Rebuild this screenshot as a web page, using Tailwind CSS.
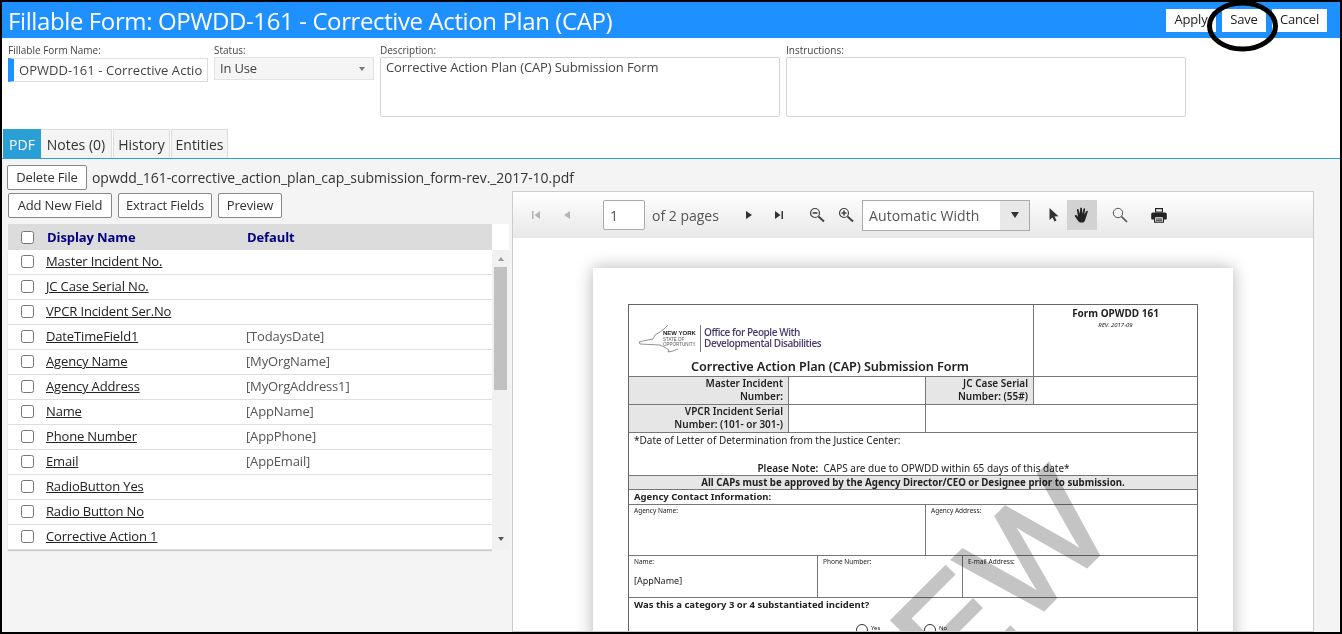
<!DOCTYPE html>
<html lang="en">
<head>
    <meta charset="UTF-8" />
    <title>Fillable Form: OPWDD-161</title>
    <script src="https://cdn.jsdelivr.net/npm/@tailwindcss/browser@4"></script>
</head>
<body class="bg-black">
<div class="relative w-[1342px] h-[634px] overflow-hidden border-2 border-black bg-[#f4f4f4] font-['Open_Sans',sans-serif] text-[#333]">

    <!-- Title bar -->
    <div class="flex items-center h-[36px] pl-[6px] pr-[13px] bg-[#1e90ff]">
        <h1 class="pt-[1px] text-[24px] tracking-[-0.39px] text-white whitespace-nowrap">Fillable Form: OPWDD-161 - Corrective Action Plan (CAP)</h1>
        <div class="ml-auto flex gap-[6px] text-[13px] tracking-[-0.2px] text-[#222]">
            <button class="w-[50px] h-[23px] bg-white">Apply</button>
            <button class="w-[44px] h-[23px] bg-white">Save</button>
            <button class="w-[55px] h-[23px] bg-white">Cancel</button>
        </div>
    </div>

    <!-- Form fields -->
    <div class="flex gap-[6px] h-[91px] pt-[5px] pl-[6px] bg-white">
        <div class="w-[200px]">
            <label class="block h-[14px] text-[10px] leading-[14px] text-[#444]">Fillable Form Name:</label>
            <input value="OPWDD-161 - Corrective Action Plan (CAP)" class="w-full h-[24px] pl-[5px] pr-[5px] border border-[#ddd] border-l-[6px] border-l-[#1e90ff] text-[13px] tracking-[0.06px] text-[#444] outline-none" />
        </div>
        <div class="w-[160px]">
            <label class="block h-[14px] text-[10px] leading-[14px] text-[#444]">Status:</label>
            <div class="flex items-center justify-between h-[23px] pl-[5px] pr-[8px] bg-[#f5f5f5] border border-[#e2e2e2] text-[13px] tracking-[-0.2px] text-[#444]">
                <span class="pt-[1px]">In Use</span>
                <span class="w-0 h-0 border-x-[3.5px] border-x-transparent border-t-[4px] border-t-[#777]"></span>
            </div>
        </div>
        <div class="w-[400px]">
            <label class="block h-[14px] text-[10px] leading-[14px] text-[#444]">Description:</label>
            <textarea class="block w-full h-[60px] px-[5px] py-0 border border-[#d4d4d4] rounded-[2px] resize-none text-[13px] tracking-[-0.1px] text-[#444] outline-none">Corrective Action Plan (CAP) Submission Form</textarea>
        </div>
        <div class="w-[400px]">
            <label class="block h-[14px] text-[10px] leading-[14px] text-[#444]">Instructions:</label>
            <textarea class="block w-full h-[60px] border border-[#d4d4d4] rounded-[2px] resize-none outline-none"></textarea>
        </div>
    </div>

    <!-- Tabs -->
    <div class="flex items-end h-[30px] pl-[1px] bg-white border-b border-[#2a9fd6] text-[14px]">
        <div class="flex items-center justify-center w-[38px] h-[29px] pt-[1px] bg-[#2a9fd6] text-white">PDF</div>
        <div class="flex items-center justify-center w-[71px] h-[29px] pt-[1px] mr-[1px] bg-[#f4f4f4] border-r border-t border-[#ddd]">Notes (0)</div>
        <div class="flex items-center justify-center w-[57px] h-[29px] pt-[1px] mr-[1px] bg-[#f4f4f4] border-x border-t border-[#ddd]">History</div>
        <div class="flex items-center justify-center w-[57px] h-[29px] pt-[1px] bg-[#f4f4f4] border-x border-t border-[#ddd]">Entities</div>
    </div>

    <div class="flex h-[473px]">
        <!-- Field list -->
        <div class="w-[510px] shrink-0">
            <div class="flex items-center h-[25px] mt-[6px] pl-[5px]">
                <button class="shrink-0 w-[80px] h-[25px] pt-[1px] bg-white border border-[#888] rounded-[2px] text-[13px] tracking-[-0.15px]">Delete File</button>
                <span class="ml-[5px] text-[14px] tracking-[-0.05px] text-[#333] whitespace-nowrap">opwdd_161-corrective_action_plan_cap_submission_form-rev._2017-10.pdf</span>
            </div>
            <div class="flex gap-[6px] mt-[3px] pl-[6px] text-[13px] tracking-[-0.15px]">
                <button class="w-[104px] h-[25px] pt-[1px] bg-white border border-[#888] rounded-[2px]">Add New Field</button>
                <button class="w-[94px] h-[25px] pt-[1px] bg-white border border-[#888] rounded-[2px]">Extract Fields</button>
                <button class="w-[64px] h-[25px] pt-[1px] bg-white border border-[#888] rounded-[2px]">Preview</button>
            </div>
            <div class="flex w-[501px] h-[326px] mt-[6px] ml-[6px]">
                <div class="w-[484px]">
                    <div class="flex items-center h-[26px] bg-[#dcdcdc] text-[13px] tracking-[-0.1px] font-bold text-[#000080]">
                        <input type="checkbox" class="ml-[13px] w-[13px] h-[13px]" />
                        <span class="ml-[13px] w-[200px] pt-[1px]">Display Name</span>
                        <span class="pt-[1px]">Default</span>
                    </div>
                    <div id="rows" class="bg-white shadow-[0_1px_1px_#ccc]"></div>
                </div>
                <div class="flex flex-col items-center w-[17px] bg-white">
                    <div class="h-[26px]"></div>
                    <div class="flex flex-col items-center w-full h-[300px] bg-[#f1f1f1]">
                        <span class="mt-[7px] w-0 h-0 border-x-[3.5px] border-x-transparent border-b-[4px] border-b-[#999]"></span>
                        <div class="mt-[6px] w-[13px] h-[123px] bg-[#c1c1c1]"></div>
                        <span class="mt-[147px] w-0 h-0 border-x-[3.5px] border-x-transparent border-t-[4px] border-t-[#555]"></span>
                    </div>
                </div>
            </div>
        </div>

        <!-- PDF viewer -->
        <div class="relative w-[802px] h-[441px] mt-[32px] overflow-hidden border border-[#ccc] bg-white">
            <div class="flex items-center h-[46px] bg-gradient-to-b from-white to-[#e8e8e8] text-[14px] text-[#555]">
                <svg class="ml-[18px] w-[10px] h-[10px] fill-[#b5b5b5]" viewBox="0 0 10 10"><rect x="1" y="1" width="1.5" height="8"/><path d="M9 1v8L3.5 5z"/></svg>
                <svg class="ml-[21px] w-[10px] h-[10px] fill-[#b5b5b5]" viewBox="0 0 10 10"><path d="M8 1v8L2 5z"/></svg>
                <input value="1" class="ml-[31px] w-[42px] h-[30px] pl-[6px] bg-white border border-[#aaa] rounded-[2px] text-[14px] text-[#555] outline-none" />
                <span class="ml-[7px] w-[74px] whitespace-nowrap">of 2 pages</span>
                <svg class="ml-[18px] w-[10px] h-[10px] fill-[#333]" viewBox="0 0 10 10"><path d="M2 1v8l6-4z"/></svg>
                <svg class="ml-[20px] w-[10px] h-[10px] fill-[#333]" viewBox="0 0 10 10"><path d="M1 1v8l5.5-4z"/><rect x="7.5" y="1" width="1.5" height="8"/></svg>
                <svg class="ml-[25px] w-[16px] h-[16px]" viewBox="0 0 16 16" fill="none" stroke="#444"><circle cx="6" cy="6" r="4.5" stroke-width="1.2"/><path d="M3.5 6h5" stroke-width="1.6"/><path d="M9.5 9.5L15 14.5" stroke-width="2"/></svg>
                <svg class="ml-[13px] w-[16px] h-[16px]" viewBox="0 0 16 16" fill="none" stroke="#444"><circle cx="6" cy="6" r="4.5" stroke-width="1.2"/><path d="M3.5 6h5M6 3.500v5" stroke-width="1.6"/><path d="M9.5 9.5L15 14.5" stroke-width="2"/></svg>
                <div class="flex ml-[8px] w-[168px] h-[31px] bg-white border border-[#aaa]">
                    <span class="flex-1 pl-[6px] leading-[29px] tracking-[0.1px]">Automatic Width</span>
                    <span class="flex items-center justify-center w-[29px] bg-[#e8e8e8]"><span class="w-0 h-0 border-x-[4px] border-x-transparent border-t-[6px] border-t-[#333]"></span></span>
                </div>
                <svg class="ml-[18px] w-[12px] h-[16px] fill-[#333]" viewBox="0 0 12 16"><path d="M1.5 1l0 12 3-2.6 2 4.2 2-1-2-4 4-.4z"/></svg>
                <div class="flex items-center justify-center ml-[7px] w-[30px] h-[30px] bg-[#d2d2d2]">
                    <svg class="w-[18px] h-[18px] fill-[#222]" viewBox="0 0 18 18"><path d="M7 16.5C5 15.5 3.8 13 2 10.5c-.8-1.200.6-2.200 1.600-1.200L5 11 4 4.200c-.2-1.300 1.400-1.500 1.700-.3L6.800 8 7.200 2.500c.1-1.300 1.700-1.300 1.800 0L9.300 8l1.200-5c.3-1.200 1.800-.9 1.600.3L11.300 8.800l1.900-3.500c.6-1.100 2-.4 1.500.8L12.800 12c-.6 2-1.300 3.500-2.300 4.500z"/></svg>
                </div>
                <svg class="ml-[15px] w-[16px] h-[16px]" viewBox="0 0 16 16" fill="none" stroke="#555"><circle cx="6" cy="6" r="4.7" stroke-width="1"/><path d="M9.500 9.500L15 15" stroke-width="1.700"/></svg>
                <svg class="ml-[23px] w-[16px] h-[15px] fill-[#222]" viewBox="0 0 16 15"><path d="M4 0h8v4.500H4zM5.200 1.200v2.300h5.600V1.200z" fill-rule="evenodd"/><path d="M2 4.500h12c1 0 1.800.8 1.800 1.800v4.200c0 .6-.4 1-1 1H13v3.300H3v-3.300H1.200c-.6 0-1-.4-1-1V6.300C.2 5.300 1 4.500 2 4.500zM4.200 9.200v4.600h7.600V9.200z" fill-rule="evenodd"/><path d="M5 10.400h6v1H5zM5 12.300h6v.9H5z"/></svg>
            </div>

            <!-- PDF page -->
            <div class="relative w-[640px] h-[600px] mx-auto mt-[30px] pt-[36px] pl-[35px] bg-white shadow-[0_0_16px_rgba(0,0,0,0.3)] text-[10px] text-[#222] font-['Noto_Sans',sans-serif]">
                <div class="w-[570px] border border-[#666] border-b-0">
                    <div class="flex h-[72px] border-b border-[#777]">
                        <div class="w-[405px] border-r border-[#777]">
                            <div class="relative flex items-center h-[47px] pl-[9px] pt-[19px]">
                                <svg class="absolute left-[9px] top-[19px] w-[62px] h-[30px]" viewBox="0 0 62 30" fill="none" stroke="#666" stroke-width="0.700"><path d="M1 18l4-1 5-1 5-1 2-4 5-3 4-3 4-4M1 18l1 2 20 1 6 3 3 2-1 2 5-1 5-2"/></svg>
                                <div class="ml-[25px] w-[36px] text-[4.500px] leading-[5px] font-['Liberation_Sans',sans-serif] text-[#555] whitespace-nowrap"><b class="block text-[#222] text-[6px] leading-[7px]">NEW YORK</b>STATE OF<br>OPPORTUNITY.</div>
                                <div class="ml-[1px] w-px h-[27px] bg-[#777]"></div>
                                <div class="ml-[3px] text-[10px] leading-[11px] font-semibold tracking-[-0.45px] text-[#4a3a6b] font-['Open_Sans',sans-serif] whitespace-nowrap">Office for People With<br>Developmental Disabilities</div>
                            </div>
                            <div class="pl-[62px] pt-[5px] text-[12.700px] font-semibold tracking-[-0.1px] whitespace-nowrap">Corrective Action Plan (CAP) Submission Form</div>
                        </div>
                        <div class="flex-1 pt-[1px] text-center">
                            <div class="text-[10px] font-bold">Form OPWDD 161</div>
                            <div class="text-[6px] italic">REV. 2017-09</div>
                        </div>
                    </div>
                    <div class="flex h-[28px] border-b border-[#777] font-semibold leading-[13px] text-right">
                        <div class="w-[160px] pr-[5px] bg-[#e6e6e6] border-r border-[#777]">Master Incident<br>Number:</div>
                        <div class="w-[137px] border-r border-[#777]"></div>
                        <div class="w-[108px] pr-[5px] bg-[#e6e6e6] border-r border-[#777]">JC Case Serial<br>Number: (55#)</div>
                    </div>
                    <div class="flex h-[28px] border-b border-[#777] font-semibold leading-[13px] text-right">
                        <div class="w-[160px] pr-[5px] bg-[#e6e6e6] border-r border-[#777] whitespace-nowrap">VPCR Incident Serial<br>Number: (101- or 301-)</div>
                        <div class="w-[137px] border-r border-[#777]"></div>
                    </div>
                    <div class="h-[43px] pt-[1px] pl-[5px] border-b border-[#777] leading-[13px]">
                        <div>*Date of Letter of Determination from the Justice Center:</div>
                        <div class="mt-[15px] pr-[4px] text-center font-semibold">Please Note:&nbsp; <span class="font-normal">CAPS are due to OPWDD within 65 days of this date*</span></div>
                    </div>
                    <div class="h-[14px] bg-[#e6e6e6] border-b border-[#777] text-center text-[9.700px] font-bold leading-[13px]">All CAPs must be approved by the Agency Director/CEO or Designee prior to submission.</div>
                    <div class="h-[15px] pl-[5px] border-b border-[#777] text-[9.500px] font-bold leading-[14px]">Agency Contact Information:</div>
                    <div class="flex h-[51px] border-b border-[#777] text-[6.500px]">
                        <div class="w-[297px] pl-[5px] pt-[1px] border-r border-[#777]">Agency Name:</div>
                        <div class="pl-[5px] pt-[1px]">Agency Address:</div>
                    </div>
                    <div class="flex h-[42px] border-b border-[#777] text-[6.500px]">
                        <div class="w-[189px] pl-[5px] pt-[1px] border-r border-[#777]">Name:<div class="mt-[7px] text-[9px]">[AppName]</div></div>
                        <div class="w-[145px] pl-[5px] pt-[1px] border-r border-[#777]">Phone Number:</div>
                        <div class="pl-[5px] pt-[1px]">E-mail Address:</div>
                    </div>
                    <div class="h-[60px] pl-[5px] text-[9.500px] font-bold">
                        <div>Was this a category 3 or 4 substantiated incident?</div>
                        <div class="flex mt-[12px] ml-[222px] font-normal text-[6px]">
                            <span class="w-[12px] h-[12px] rounded-full border border-[#333]"></span><span class="ml-[3px] w-[53px]">Yes</span>
                            <span class="w-[12px] h-[12px] rounded-full border border-[#333]"></span><span class="ml-[3px]">No</span>
                        </div>
                    </div>
                </div>
                <span class="absolute left-[-18px] top-[398px] origin-bottom-right -rotate-45 w-[300px] text-right font-['Liberation_Sans',sans-serif] text-[145px] leading-none text-[#c4c4c4] [-webkit-text-stroke:3px_#c4c4c4] mix-blend-multiply whitespace-nowrap">PREVIEW</span>
            </div>
        </div>
    </div>

    <!-- Hand-drawn ring around Save -->
    <svg class="absolute left-[1203px] top-[-2px] w-[80px] h-[58px]" viewBox="0 0 80 58" fill="none" stroke="#000" stroke-width="5"><ellipse cx="37.500" cy="26" rx="33" ry="23"/></svg>
</div>

<script>
    // field rows: name, default value
    const fields = [
        ["Master Incident No.", ""],
        ["JC Case Serial No.", ""],
        ["VPCR Incident Ser.No", ""],
        ["DateTimeField1", "[TodaysDate]"],
        ["Agency Name", "[MyOrgName]"],
        ["Agency Address", "[MyOrgAddress1]"],
        ["Name", "[AppName]"],
        ["Phone Number", "[AppPhone]"],
        ["Email", "[AppEmail]"],
        ["RadioButton Yes", ""],
        ["Radio Button No", ""],
        ["Corrective Action 1", ""]
    ];
    document.getElementById("rows").innerHTML = fields.map(f => `
        <div class="flex items-center h-[25px] border-b border-[#ddd] text-[13px] tracking-[-0.15px]">
            <input type="checkbox" class="ml-[13px] mb-[2px] w-[13px] h-[13px]" />
            <a class="ml-[12px] w-[200px] underline text-[#222]">${f[0]}</a>
            <span class="text-[#555]">${f[1]}</span>
        </div>`).join("");
</script>
</body>
</html>
